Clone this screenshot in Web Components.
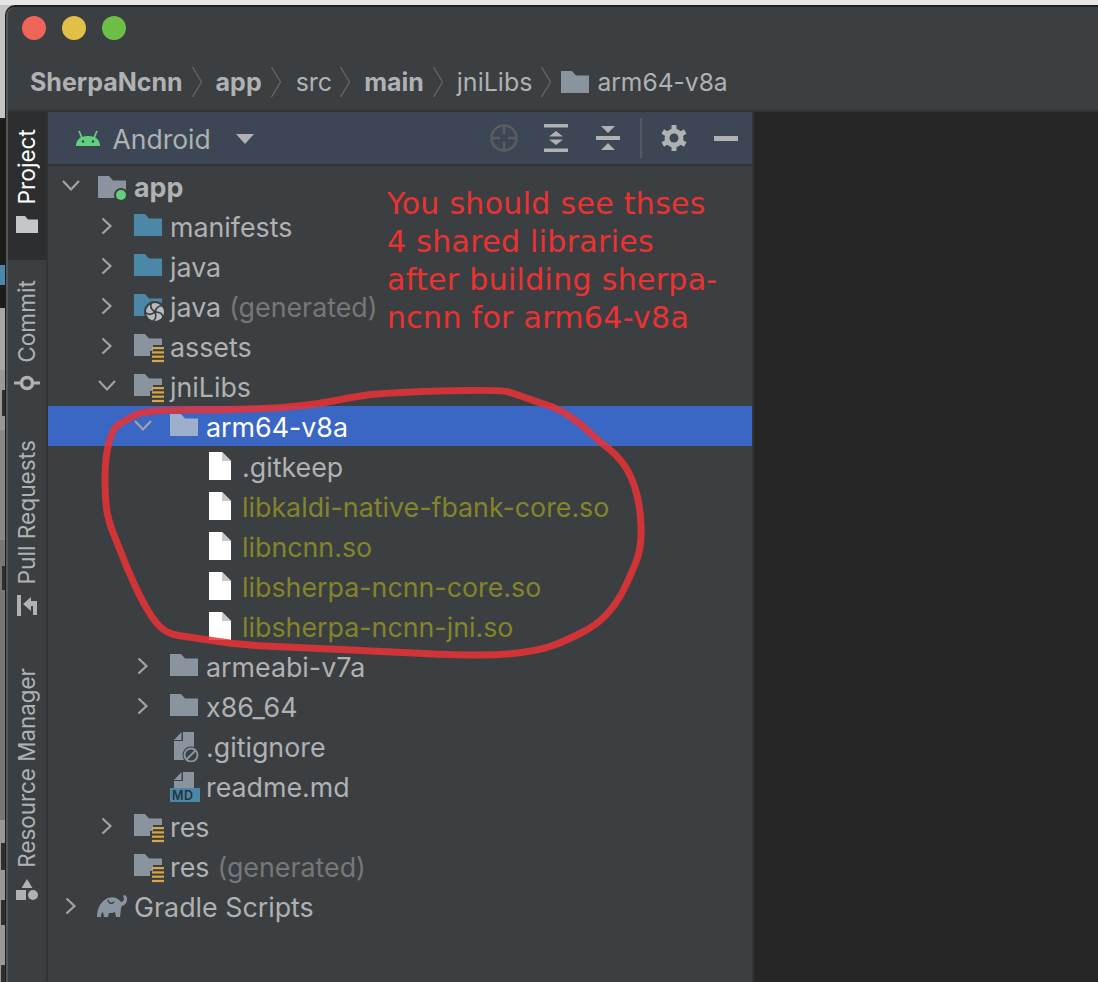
<!DOCTYPE html>
<html><head><meta charset="utf-8"><title>SherpaNcnn</title>
<style>
html,body{margin:0;padding:0;height:100%;overflow:hidden}
body{width:1098px;height:982px;background:#9a9a9a;font-family:Inter,"Noto Sans",sans-serif}
</style></head><body>
<ide-window>
<traffic-lights slot="title"></traffic-lights>
<bread-crumbs slot="crumbs"></bread-crumbs>
<side-strip slot="strip"></side-strip>
<project-panel slot="panel"></project-panel>
</ide-window>
<script>
const F='M0 2h11l4 4.500H28V24H0z';
function icon(kind){
 switch(kind){
 case 'module':return `<svg width="32" height="28" viewBox="0 0 32 28" style="overflow:visible"><path d="M0 4h11l4 4.500H28V26H0z" fill="#8a949e"/><circle cx="23" cy="23" r="7" fill="#3c3f41"/><circle cx="23" cy="23" r="5" fill="#62d07f"/></svg>`;
 case 'blue':return `<svg width="32" height="28" viewBox="0 0 32 28"><path d="${F}" fill="#4b87a6"/></svg>`;
 case 'gen':{let b='';for(let i=0;i<5;i++)b+=`<path transform="rotate(${i*72} 21 20)" d="M21 20C22 16 25 13 30 14"/>`;
  return `<svg width="32" height="28" viewBox="0 0 32 28" style="overflow:visible"><path d="${F}" fill="#4b87a6"/><circle cx="21" cy="20" r="11" fill="#3c3f41"/><circle cx="21" cy="20" r="9" fill="#b8bcc0"/><g fill="none" stroke="#3c3f41" stroke-width="1.600">${b}</g><circle cx="21" cy="20" r="1.800" fill="#3c3f41"/></svg>`;}
 case 'res':return `<svg width="32" height="28" viewBox="0 0 32 28" style="overflow:visible"><path d="${F}" fill="#8a949e"/><path d="M16 19h3v-6h13v19H16z" fill="#3c3f41"/><g fill="#d9a648"><rect x="18" y="15" width="12" height="2.200"/><rect x="18" y="19.300" width="12" height="2.200"/><rect x="18" y="23.600" width="12" height="2.200"/><rect x="18" y="27.900" width="12" height="2.200"/></g></svg>`;
 case 'gray':return `<svg width="32" height="28" viewBox="0 0 32 28"><path d="${F}" fill="#8a949e"/></svg>`;
 case 'sel':return `<svg width="32" height="28" viewBox="0 0 32 28"><path d="${F}" fill="#9dafcb"/></svg>`;
 case 'file':return `<svg width="32" height="30" viewBox="0 0 32 30"><path d="M3 1H16L25 10V29H3z" fill="#fff"/><path d="M16 1L25 10H16z" fill="#c8c8c8"/></svg>`;
 case 'ignore':return `<svg width="32" height="32" viewBox="0 0 32 32"><path d="M13 2H24V30H4V11H13z" fill="#8a949e"/><path d="M4 10L11.500 2V10z" fill="#8a949e"/><circle cx="21" cy="25" r="8.500" fill="#3c3f41"/><circle cx="21" cy="25" r="6.500" fill="none" stroke="#8a949e" stroke-width="2"/><path d="M16.500 29.500l9-9" stroke="#8a949e" stroke-width="2"/></svg>`;
 case 'md':return `<svg width="32" height="32" viewBox="0 0 32 32"><path d="M13 2H24V18H4V11H13z" fill="#8a949e"/><path d="M4 10L11.500 2V10z" fill="#8a949e"/><rect x="0" y="18" width="30" height="14" fill="#4b87a6"/><text x="2" y="30" font-family="Inter,sans-serif" font-weight="600" font-size="12.500" fill="#26343e" letter-spacing=".5">MD</text></svg>`;
 case 'gradle':return `<svg width="32" height="24" viewBox="0 0 32 24" style="margin-left:-2px"><path d="M1 23C1 14 5 7 12 4C15 3 18 3 20 4C22 5 24 6 25 8C27 8 28 6 28 4L27 3L28 1C30 1 31 3 31 5C31 9 29 11 26 12L25 14L24 23H20L19 18C17 19 15 19 13 19L12 23H8L7 18C5 19 5 21 5 23Z" fill="#8a949e"/><path d="M12 6C13 10 16 10 18 8" fill="none" stroke="#3c3f41" stroke-width="1.300"/></svg>`;
 }
}
const chevR=`<svg width="16" height="20" viewBox="0 0 16 20"><path d="M3.500 2.500l8 7.500-8 7.500" fill="none" stroke="#a0a4a7" stroke-width="2.200"/></svg>`;
const chevD=`<svg width="20" height="14" viewBox="0 0 20 14"><path d="M2 2l8 8.500L18 2" fill="none" stroke="#a0a4a7" stroke-width="2.200"/></svg>`;

class TrafficLights extends HTMLElement{constructor(){super();this.attachShadow({mode:'open'}).innerHTML=`<style>
:host{display:flex;gap:16px;padding:9px 0 0 14px;height:54px;box-sizing:border-box}
i{display:block;width:24px;height:24px;border-radius:50%}
</style><i style="background:#ef6459"></i><i style="background:#e2bf47"></i><i style="background:#6cbe46"></i>`}}
customElements.define('traffic-lights',TrafficLights);

class BreadCrumbs extends HTMLElement{constructor(){super();
 const sep=`<svg class="s" width="10" height="30" viewBox="0 0 10 30"><path d="M.500 0l9 15-9 15" fill="none" stroke="#626566" stroke-width="1.300"/></svg>`;
 this.attachShadow({mode:'open'}).innerHTML=`<style>
:host{display:flex;align-items:center;height:49px;box-sizing:border-box;padding:0 0 7px 22px;color:#afb1b3;font-size:25px;white-space:nowrap}
b{font-weight:700}span,b{display:block}
.s{margin:0 14px 0 9px;flex:none}
.f{margin:0 8px 0 -4px;flex:none}
.l{font-size:24.600px}
</style><b>SherpaNcnn</b>${sep}<b>app</b>${sep}<span style="margin:0 -1px 0 1px">src</span>${sep}<b>main</b>${sep}<span>jniLibs</span>${sep}<svg class="f" width="28" height="24" viewBox="0 0 28 24"><path d="M0 1h11l4 4.500H28V23H0z" fill="#8a949e"/></svg><span class="l">arm64-v8a</span>`}}
customElements.define('bread-crumbs',BreadCrumbs);

class StripTab extends HTMLElement{constructor(){super();this.attachShadow({mode:'open'}).innerHTML=`<style>
:host{display:flex;flex-direction:column-reverse;align-items:center;justify-content:flex-start;gap:12px;width:38px;box-sizing:border-box;color:#afb1b3;font-size:22.700px;flex:none}
.t{writing-mode:vertical-rl;transform:rotate(180deg);white-space:nowrap;line-height:38px}
.i{display:flex}
:host([active]){background:#2c2e30;color:#fff}
</style><div class="i"><slot name="icon"></slot></div><div class="t"><slot></slot></div>`}}
customElements.define('strip-tab',StripTab);

class SideStrip extends HTMLElement{constructor(){super();this.attachShadow({mode:'open'}).innerHTML=`<style>
:host{display:flex;flex-direction:column;width:38px;height:100%;background:#3c3f41;box-sizing:border-box}
</style>
<strip-tab active style="padding:0 0 26px;height:148px;box-sizing:border-box"><svg slot="icon" width="24" height="18" viewBox="0 0 24 18"><path fill="#c4c6c8" d="M1 0h9l3 3.500h10V17H1z"/></svg>Project</strip-tab>
<strip-tab style="margin-top:20px"><svg slot="icon" width="26" height="16" viewBox="0 0 26 16"><circle cx="13" cy="8" r="5.500" fill="none" stroke="#afb1b3" stroke-width="3.500"/><path d="M0 8h6M20 8h6" stroke="#afb1b3" stroke-width="3"/></svg>Commit</strip-tab>
<strip-tab style="margin-top:49px;gap:11px"><svg slot="icon" width="22" height="22" viewBox="0 0 22 22"><path fill="#afb1b3" d="M1 0h4v21H1zM7 9L15 2V6H21V20H17V11H15V16Z"/></svg>Pull Requests</strip-tab>
<strip-tab style="margin-top:51px;gap:11px;font-size:22.400px"><svg slot="icon" width="24" height="22" viewBox="0 0 24 22"><path fill="#afb1b3" d="M12 0l5.500 9h-11zM1 11h10v10H1z"/><circle cx="18" cy="16" r="5" fill="#afb1b3"/></svg>Resource Manager</strip-tab>`}}
customElements.define('side-strip',SideStrip);

class TreeRow extends HTMLElement{
 connectedCallback(){
  const ind=+this.getAttribute('indent')||0, tw=this.getAttribute('tw'),k=this.getAttribute('icon'),
   col=this.getAttribute('c'),ex=this.getAttribute('extra'),bold=this.hasAttribute('b');
  const t=tw==='r'?chevR:tw==='d'?chevD:'';
  const sel=this.hasAttribute('sel');
  this.attachShadow({mode:'open'}).innerHTML=`<style>
:host{display:flex;align-items:center;height:40px;font-size:26.800px;white-space:nowrap;color:${sel?'#fff':'#afb1b3'};background:${sel?'#3a66c4':'transparent'};flex:none}
.tw{width:22px;display:flex;justify-content:center;margin-left:${ind}px;margin-right:16px;flex:none}
.ic{width:36px;display:flex;flex:none}
.x{color:#75787a;margin-left:8px;padding-top:1px}
.n{padding-top:1px;${bold?'font-weight:700;':''}${col?'color:'+col+';':''}}
</style><span class="tw">${t}</span><span class="ic">${icon(k)}</span><span class="n"><slot></slot></span>${ex?`<span class="x">${ex}</span>`:''}`;
 }
}
customElements.define('tree-row',TreeRow);

class PanelHeader extends HTMLElement{constructor(){super();this.attachShadow({mode:'open'}).innerHTML=`<style>
:host{display:flex;align-items:center;height:52px;background:#3c4654;color:#afb1b3;font-size:26.500px;box-sizing:border-box;padding-left:28px;flex:none}
.a{margin-right:12.500px;display:flex}
.c{margin-left:25px;margin-top:2px;width:0;height:0;border:9px solid transparent;border-top:10px solid #afb1b3;border-bottom:0}
.sp{flex:1}
.n{padding-top:1px}
.t{display:flex;align-items:center;padding-right:14px;height:100%}
.t svg{flex:none;display:block}
.d{width:2px;height:40px;background:#545a64;margin:0 19px 0 20px}
</style>
<span class="a"><svg width="24" height="16" viewBox="0 0 24 16"><path fill="#62d07f" d="M0 16C0 10 4 6 12 6s12 4 12 10z"/><path d="M6 8L3 1M18 8l3-7" stroke="#62d07f" stroke-width="1.800"/><circle cx="7" cy="11.500" r="1.300" fill="#3c4654"/><circle cx="17" cy="11.500" r="1.300" fill="#3c4654"/></svg></span>
<span class="n">Android</span><span class="c"></span><span class="sp"></span>
<div class="t">
<svg width="28" height="28" viewBox="0 0 28 28" style="margin-right:26px"><circle cx="14" cy="14" r="12.500" fill="none" stroke="#5a5d5f" stroke-width="2.500"/><path d="M14 1v9M14 18v9M1 14h9M18 14h9" stroke="#5a5d5f" stroke-width="2.500"/></svg>
<svg width="24" height="28" viewBox="0 0 24 28" style="margin-right:28px"><path fill="#afb1b3" d="M0 0h24v3.500H0zM0 24.500h24V28H0zM12 7l7 5.500H5zM12 21l-7-5.500h14z"/></svg>
<svg width="24" height="24" viewBox="0 0 24 24"><path fill="#afb1b3" d="M0 10h24v4H0zM12 7L5 0h14zM12 17l7 7H5z"/></svg>
<span class="d"></span>
<svg width="26" height="26" viewBox="0 0 26 26" style="margin-right:27px"><g fill="#afb1b3"><circle cx="13" cy="13" r="9.500"/><rect x="10.500" y="0" width="5" height="26"/><rect x="10.500" y="0" width="5" height="26" transform="rotate(60 13 13)"/><rect x="10.500" y="0" width="5" height="26" transform="rotate(120 13 13)"/></g><circle cx="13" cy="13" r="4.500" fill="#3c4654"/></svg>
<svg width="24" height="5" viewBox="0 0 24 5"><rect width="24" height="5" fill="#afb1b3"/></svg>
</div>`}}
customElements.define('panel-header',PanelHeader);

class RedNote extends HTMLElement{constructor(){super();this.attachShadow({mode:'open'}).innerHTML=`<style>
:host{display:block;position:absolute;left:339px;top:73px;color:#ea3232;font-family:"DejaVu Sans",sans-serif;font-size:30px;letter-spacing:.3px;line-height:38px;white-space:nowrap;width:360px}
</style><slot></slot>`}}
customElements.define('red-note',RedNote);

const PTS=[[363,395],[390,393],[413,392],[430,391],[500,390],[513,393],[537,402],[557,408],[580,423],[600,442],[617,455],[630,473],[640,503],[642,547],[630,577],[617,603],[597,625],[563,642],[540,650],[503,655],[457,655],[390,652],[290,647],[240,645],[190,637],[173,635],[160,628],[147,610],[132,580],[120,550],[108,520],[105,497],[105,457],[113,428],[123,422],[143,410],[223,410],[303,407]];
function smooth(p){const m=(a,b)=>[(a[0]+b[0])/2,(a[1]+b[1])/2];let s=m(p[p.length-1],p[0]);let d=`M${s[0]} ${s[1]}`;p.forEach((q,i)=>{const e=m(q,p[(i+1)%p.length]);d+=`Q${q[0]} ${q[1]} ${e[0]} ${e[1]}`});return d+'Z'}

class ProjectPanel extends HTMLElement{constructor(){super();this.attachShadow({mode:'open'}).innerHTML=`<style>
:host{display:flex;flex-direction:column;position:relative;height:100%;width:704px;background:#3c3f41;flex:none}
.h{height:2px;background:#313335;flex:none}
.tree{display:flex;flex-direction:column}
svg.loop{position:absolute;left:-48px;top:-112px;pointer-events:none}
</style>
<panel-header></panel-header><div class="h"></div>
<div class="tree">
<tree-row indent="12" tw="d" icon="module" b>app</tree-row>
<tree-row indent="48" tw="r" icon="blue">manifests</tree-row>
<tree-row indent="48" tw="r" icon="blue">java</tree-row>
<tree-row indent="48" tw="r" icon="gen" extra="(generated)">java</tree-row>
<tree-row indent="48" tw="r" icon="res">assets</tree-row>
<tree-row indent="48" tw="d" icon="res">jniLibs</tree-row>
<tree-row indent="84" tw="d" icon="sel" sel>arm64-v8a</tree-row>
<tree-row indent="120" icon="file">.gitkeep</tree-row>
<tree-row indent="120" icon="file" c="#84842a">libkaldi-native-fbank-core.so</tree-row>
<tree-row indent="120" icon="file" c="#84842a">libncnn.so</tree-row>
<tree-row indent="120" icon="file" c="#84842a">libsherpa-ncnn-core.so</tree-row>
<tree-row indent="120" icon="file" c="#84842a">libsherpa-ncnn-jni.so</tree-row>
<tree-row indent="84" tw="r" icon="gray">armeabi-v7a</tree-row>
<tree-row indent="84" tw="r" icon="gray">x86_64</tree-row>
<tree-row indent="84" icon="ignore">.gitignore</tree-row>
<tree-row indent="84" icon="md">readme.md</tree-row>
<tree-row indent="48" tw="r" icon="res">res</tree-row>
<tree-row indent="48" icon="res" extra="(generated)">res</tree-row>
<tree-row indent="12" tw="r" icon="gradle">Gradle Scripts</tree-row>
</div>
<red-note>You should see thses<br>4 shared libraries<br>after building sherpa-<br>ncnn for arm64-v8a</red-note>
<svg class="loop" width="1098" height="982" viewBox="0 0 1098 982"><path opacity=".85" fill="none" stroke="#ea3236" stroke-width="7" stroke-linejoin="round" d="${smooth(PTS)}"/></svg>`}}
customElements.define('project-panel',ProjectPanel);

class IdeWindow extends HTMLElement{constructor(){super();this.attachShadow({mode:'open'}).innerHTML=`<style>
:host{display:block;width:1098px;height:982px;box-sizing:border-box;padding:5px 0 0 5px;
background:
 linear-gradient(#e6e6e6,#e6e6e6) 0 0/100% 5px no-repeat,
 linear-gradient(#2f2f2f,#2f2f2f) 2px 390px/3px 26px no-repeat,
 linear-gradient(#2f2f2f,#2f2f2f) 2px 566px/3px 24px no-repeat,
 linear-gradient(#2f2f2f,#2f2f2f) 1px 843px/4px 27px no-repeat,
 linear-gradient(#2f2f2f,#2f2f2f) 1px 900px/4px 25px no-repeat,
 linear-gradient(#2f2f2f,#2f2f2f) 1px 965px/4px 17px no-repeat,
 linear-gradient(#4b87a6,#4b87a6) 0 265px/5px 20px no-repeat,
 linear-gradient(#c4c4c4 0 118px,#1f1c1c 118px 308px,#a8a8a8 308px 370px,#999 370px 430px,#888 430px 540px,#777 540px 820px,#999 820px)}
.w{height:100%;background:#3c3f41;border-left:1px solid #1e1e1e;border-top:2px solid #1e1e1e;border-top-left-radius:10px;box-sizing:border-box;padding-left:2px;box-shadow:inset 2px 0 #55585a;display:flex;flex-direction:column;overflow:hidden}
.sep{height:2px;background:#313335;flex:none}
.body{flex:1;display:flex;min-height:0}
.gut{width:2px;background:#313335;flex:none}
.ed{flex:1;background:#262626;border-left:2px solid #313335}
</style><div class="w"><slot name="title"></slot><slot name="crumbs"></slot><div class="sep"></div>
<div class="body"><slot name="strip"></slot><div class="gut"></div><slot name="panel"></slot><div class="ed"></div></div></div>`}}
customElements.define('ide-window',IdeWindow);
</script>
</body></html>
